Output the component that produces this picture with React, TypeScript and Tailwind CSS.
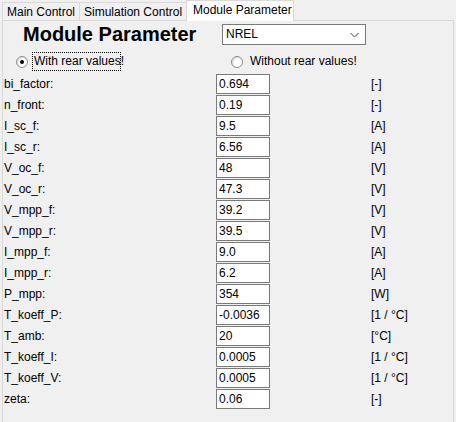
import React from "react";

const rows: [string, string, string][] = [
  ["bi_factor:", "0.694", "[-]"],
  ["n_front:", "0.19", "[-]"],
  ["I_sc_f:", "9.5", "[A]"],
  ["I_sc_r:", "6.56", "[A]"],
  ["V_oc_f:", "48", "[V]"],
  ["V_oc_r:", "47.3", "[V]"],
  ["V_mpp_f:", "39.2", "[V]"],
  ["V_mpp_r:", "39.5", "[V]"],
  ["I_mpp_f:", "9.0", "[A]"],
  ["I_mpp_r:", "6.2", "[A]"],
  ["P_mpp:", "354", "[W]"],
  ["T_koeff_P:", "-0.0036", "[1 / °C]"],
  ["T_amb:", "20", "[°C]"],
  ["T_koeff_I:", "0.0005", "[1 / °C]"],
  ["T_koeff_V:", "0.0005", "[1 / °C]"],
  ["zeta:", "0.06", "[-]"],
];

function Radio({ checked }: { checked: boolean }) {
  return (
    <div className="w-[12px] h-[12px] rounded-full border border-[#8a8a8a] bg-white flex items-center justify-center shadow-[inset_1px_1px_1px_rgba(0,0,0,0.15)]">
      {checked && <div className="w-[4px] h-[4px] rounded-full bg-black" />}
    </div>
  );
}

export default function App() {
  return (
    <div className="w-[456px] h-[422px] overflow-hidden bg-[#f0f0f0] text-[12px] text-black font-['Liberation_Sans',Arial,sans-serif]">
      {/* tab strip */}
      <div className="flex items-start h-[21px] -mb-px relative z-10 pl-[2px]">
        <div className="mt-[2px] h-[18px] w-[77px] border-l border-t border-[#d9d9d9] bg-[#f0f0f0] pl-[4px] leading-[18px] whitespace-nowrap">
          Main Control
        </div>
        <div className="mt-[2px] h-[18px] w-[107px] border-l border-t border-[#d9d9d9] bg-[#f0f0f0] pl-[4px] leading-[18px] whitespace-nowrap">
          Simulation Control
        </div>
        <div className="h-[21px] w-[108px] border-l border-t border-r border-[#d9d9d9] bg-white pl-[6px] leading-[19px] whitespace-nowrap">
          Module Parameter
        </div>
      </div>
      {/* panel */}
      <div className="ml-[2px] w-[452px] h-[410px] border border-[#d9d9d9] bg-[#f0f0f0]">
        {/* header */}
        <div className="flex items-start mt-[2px] h-[23px] pl-[20px]">
          <div className="w-[199px] text-[20px] leading-[23px] font-bold whitespace-nowrap">
            Module Parameter
          </div>
          <div className="mt-[1px] w-[144px] h-[21px] border border-[#7a7a7a] bg-white flex items-center justify-between pl-[3px] pr-[6px]">
            <span className="leading-[19px]">NREL</span>
            <svg width="9" height="6" viewBox="0 0 9 6">
              <path d="M0.5 1 L4.5 5 L8.5 1" fill="none" stroke="#404040" strokeWidth="1" />
            </svg>
          </div>
        </div>
        {/* radios */}
        <div className="flex items-center mt-[6px] h-[19px]">
          <div className="w-[228px] flex items-center">
            <div className="ml-[13px]">
              <Radio checked />
            </div>
            <div className="ml-[4px] w-[89px] h-[19px] border border-dotted border-black pl-[1px] leading-[17px] whitespace-nowrap">
              With rear values!
            </div>
          </div>
          <Radio checked={false} />
          <div className="ml-[7px] leading-[17px] whitespace-nowrap">Without rear values!</div>
        </div>
        {/* rows */}
        <div className="mt-[3px] flex flex-col gap-[1px]">
          {rows.map(([label, value, unit]) => (
            <div key={label} className="flex items-center h-[20px]">
              <div className="w-[213px] pl-[1px] leading-[20px] whitespace-nowrap">{label}</div>
              <div className="w-[54px] h-[20px] border border-[#7a7a7a] bg-white pl-[2px] leading-[18px] whitespace-nowrap">
                {value}
              </div>
              <div className="ml-[101px] leading-[20px] whitespace-nowrap">{unit}</div>
            </div>
          ))}
        </div>
      </div>
    </div>
  );
}
